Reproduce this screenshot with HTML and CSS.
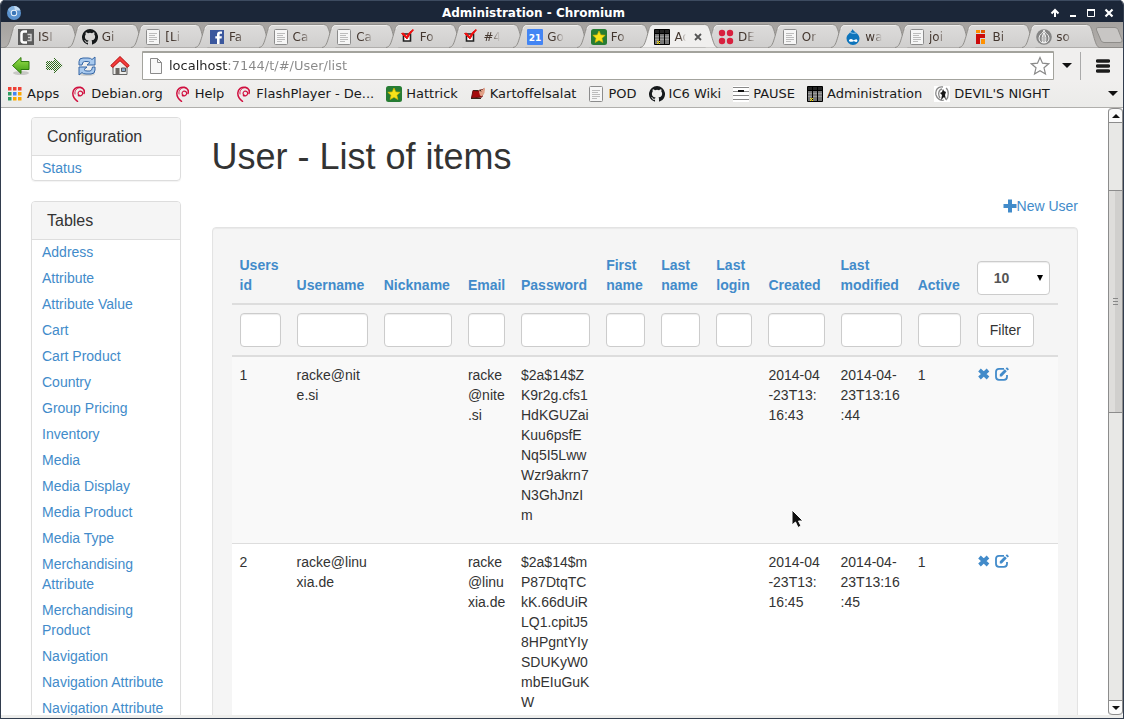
FILE: index.html
```html
<!DOCTYPE html>
<html lang="en">
<head>
<meta charset="utf-8">
<title>Administration - Chromium</title>
<link rel="stylesheet" href="styles.css">
</head>
<body>
<svg class="defs" aria-hidden="true">
  <defs>
    <linearGradient id="g-tab" x1="0" y1="0" x2="0" y2="1"><stop offset="0" stop-color="#dddcdb"/><stop offset="1" stop-color="#d0cfce"/></linearGradient>
    <linearGradient id="g-green" x1="0" y1="0" x2="0" y2="1"><stop offset="0" stop-color="#9be04c"/><stop offset="1" stop-color="#3c9a10"/></linearGradient>
    <pattern id="dots" width="2" height="2" patternUnits="userSpaceOnUse"><path d="M0 0h1v1H0zM1 1h1v1H1z" fill="#2f6a1c"/></pattern>
  </defs>
  <symbol id="tab" viewBox="0 0 78 26" preserveAspectRatio="none"><path d="M0 25.5C4 25 5 21 7 14.5C9 7 10 2.500 14 2.500H65C69 2.500 70 7 72 14.500C74 21 75 25 78 25.500" stroke="#8f8d8a"/><path d="M10 7C11 4 12 3.500 14 3.500H65" fill="none" stroke="#eeedec"/></symbol>
  <symbol id="page" viewBox="0 0 16 16"><rect x="1.500" y=".5" width="13" height="15" rx="1" fill="#f6f6f6" stroke="#8c8c8c"/><path d="M4 4.500h8M4 6.500h6M4 8.500h8M4 10.500h8M4 12.500h5" stroke="#bcbcbc"/></symbol>
  <symbol id="c3" viewBox="0 0 16 16"><path fill="#5c5c5c" d="M0 0h16v16H0z"/><path d="M9 2.500H6Q3.500 2.500 3.500 5v6Q3.500 13.500 6 13.500h3" fill="none" stroke="#fff" stroke-width="2.500"/><path d="M9.500 5.500H13v6H9.500M10 8.500h3" fill="none" stroke="#d0d0d0" stroke-width="1.500"/></symbol>
  <symbol id="github" viewBox="0 0 16 16"><path fill="#15181a" d="M8 0a8 8 0 0 0-2.530 15.590c.4.070.55-.17.55-.38v-1.490c-2.230.48-2.690-.95-2.690-.95-.36-.92-.89-1.170-.89-1.170-.73-.5.050-.49.050-.49.810.060 1.230.83 1.230.83.720 1.230 1.880.87 2.340.67.070-.52.280-.87.510-1.070-1.780-.2-3.650-.89-3.650-3.950 0-.87.310-1.590.82-2.150-.08-.2-.36-1.020.08-2.120 0 0 .67-.21 2.200.82a7.600 7.600 0 0 1 4 0c1.530-1.040 2.200-.82 2.200-.82.440 1.100.16 1.920.08 2.120.51.560.82 1.270.82 2.150 0 3.070-1.870 3.750-3.650 3.950.29.250.54.730.54 1.480v2.190c0 .21.150.46.550.38A8 8 0 0 0 8 0z"/></symbol>
  <symbol id="facebook" viewBox="0 0 16 16"><path fill="#3b579d" d="M1 1h14v14H1z"/><path fill="#fff" d="M8 15V9.500H6.300V7.200H8V5.500C8 3.600 9 2.600 11 2.600h2v2.200h-1.200c-.9 0-1.200.4-1.200 1.100v1.300h2.300l-.3 2.300h-2V15z"/></symbol>
  <symbol id="check" viewBox="0 0 16 16"><path d="M3.500 5h7v7h-7z" fill="#fff" stroke="#222" stroke-width="1.600"/><path d="M1.500 4.500l2-.5 3 3.500Q9 3 13 .5l.5.500Q9.500 5 7 10z" fill="#ee1010" stroke="#ee1010"/></symbol>
  <symbol id="star-badge" viewBox="0 0 16 16"><rect width="16" height="16" rx="2.500" fill="#267c33"/><path fill="#f8e31a" stroke="#e0b800" stroke-width=".6" stroke-linejoin="round" d="M8 2l1.800 3.900 4.400.4-3.300 2.900 1 4.300L8 11.300l-3.900 2.200 1-4.300-3.300-2.900 4.400-.4z"/></symbol>
  <symbol id="table" viewBox="0 0 16 16"><path d="M.5.500h15v15H.5z" fill="#777" stroke="#000"/><path d="M1 1h14v3H1z" fill="#222"/><path d="M5.500 1v14M10.500 1v14M1 4.500h14" stroke="#000"/><path d="M1 7.500h14M1 10.500h14" stroke="#999" stroke-dasharray="4 1"/><path d="M3 12h1v1H3zM5 12h1v1H5zM4 13h1v1H4zM3 14h1v1H3zM5 14h1v1H5z" fill="#ffe500"/></symbol>
  <symbol id="four-dots" viewBox="0 0 16 16"><g fill="#d8203e"><circle cx="4" cy="4" r="3.200"/><circle cx="12" cy="4" r="3.200"/><circle cx="4" cy="12" r="3.200"/><circle cx="12" cy="12" r="3.200"/></g></symbol>
  <symbol id="drop" viewBox="0 0 16 16"><path fill="#0d74bb" d="M7.500 0c1 3 7 4.500 7 9.500a6.500 6.500 0 0 1-13 0C1.500 5 6.500 3.500 7.500 0z"/><path d="M5 3.500Q8 5 11.500 4" stroke="#8cc7ef" fill="none"/><path fill="#fff" d="M4 11c1.500-1.500 3-1 4 0s2.500-1.500 3.800-.5.500 2.800-.8 2.500-2-1.200-3-.6-4.500.8-4-1.400z"/></symbol>
  <symbol id="blocks" viewBox="0 0 16 16"><path fill="#ff9000" d="M3 1h4v3H3zM8 10h4v5H8z"/><path fill="#e05a00" d="M8 1h4v3H8z"/><path fill="#cc0a0a" d="M3 5h9v4H7v6H3z"/></symbol>
  <symbol id="onion" viewBox="0 0 16 16"><circle cx="8" cy="8" r="7.800" fill="#858585"/><path d="M8 1c0 3-5 4-5 8 0 3 2 5 5 5s5-2 5-5c0-4-5-5-5-8zM8 3v11M8 4C6 6 5.500 11 7 14M8 4c2 2 2.500 7 1 10" fill="none" stroke="#fff" stroke-width=".9"/></symbol>
  <symbol id="debian" viewBox="0 0 16 16"><path d="M8.500 9.200C6.500 8.600 6.600 5.800 8.600 5.200c2-.5 3.400 1 3 2.600-.3 1.700-2.600 2.600-4.300 1.800" fill="none" stroke="#d0103f" stroke-width="1.200" stroke-linecap="round"/><path d="M13 7.500C14 4.500 12.500 2 9.500 1.300 5.500.5 2 3 1.800 7c-.1 3.500 2 6.500 4.700 8.300" fill="none" stroke="#d0103f" stroke-width="1.500" stroke-linecap="round"/><path d="M13.300 4.500C12 1.500 8 .8 5.500 3.200 4 4.700 3.600 6.500 4 8" fill="none" stroke="#d0103f" stroke-width=".9" stroke-linecap="round"/></symbol>
  <symbol id="apps" viewBox="0 0 16 16"><path fill="#ee4035" d="M1 1h3.500v3.500H1zM6 1h3.500v3.500H6zM11 1h3.500v3.500H11z"/><path fill="#2f9e63" d="M1 6h3.500v3.500H1zM1 11h3.500v3.500H1z"/><path fill="#4385f4" d="M6 6h3.500v3.500H6z"/><path fill="#fba800" d="M11 6h3.500v3.500H11zM6 11h3.500v3.500H6zM11 11h3.500v3.500H11z"/></symbol>
  <symbol id="salad" viewBox="0 0 16 16"><path fill="#a50b0b" stroke="#651010" d="M1.500 12L3 4.500 8 5l6-2-2 8z"/><path fill="#e2a187" d="M9 6l1-2.500 2 .5 3-2.500-.5 5.500-2.500 3.500-2-1z"/><path d="M1 12.500h10M4 4.500h4M10 3.500l1 2" stroke="#382719"/></symbol>
  <symbol id="lines" viewBox="0 0 16 16"><path fill="#fff" d="M0 0h16v16H0z"/><path d="M0 1.500h16M0 5.500h16M0 9.500h16M0 13.500h16" stroke="#888"/><path d="M5 4h6v2H5z" fill="#111"/></symbol>
  <symbol id="night" viewBox="0 0 16 16"><path fill="#fff" d="M0 0h16v16H0z"/><path d="M9 1C4 0 1 4 2 9c1 4 5 6 8 5M8 3C4 4 4 9 6 12M12 2c3 2 3 9 0 12" fill="none" stroke="#888" stroke-width="1.300"/><path d="M9 3l1 2 2 1-1 3 1 5-2-3-3 3 1-5-2-2 2-1z" fill="#181818"/></symbol>
  <symbol id="remove" viewBox="0 0 14 14"><path d="M2.500 3l8.500 8M11 3l-8.500 8" stroke="currentColor" stroke-width="3.800"/></symbol>
  <symbol id="edit" viewBox="0 0 14 14"><path d="M9 1.800H4Q1 1.800 1 4.800v5Q1 12.800 4 12.800h5q3 0 3-3V8" fill="none" stroke="currentColor" stroke-width="1.800"/><path d="M4.800 9.500V7.200l5-5 2 2-5 5.300zM10.600 1.500L12 .2l2 2-1.300 1.400z" fill="currentColor"/></symbol>
</svg>

<div class="window">
  <header class="titlebar">
    <svg class="logo" viewBox="0 0 14 14"><circle cx="7" cy="7" r="7" fill="#5b93cf"/><path d="M7 0a7 7 0 0 1 6.500 4.500H7z" fill="#c3dbf2"/><path d="M1 3.500A7 7 0 0 1 7 0l1 4-4 4z" fill="#86b3e0"/><circle cx="7" cy="7" r="3.200" fill="#eaf3fb"/><circle cx="7" cy="7" r="2.300" fill="#3b76b7"/></svg>
    <div class="title">Administration - Chromium</div>
    <button class="wm" aria-label="Shade"><svg viewBox="0 0 10 10"><path d="M5 9V3M1.500 5.500L5 2l3.500 3.500" fill="none" stroke="#fff" stroke-width="2"/></svg></button>
    <button class="wm" aria-label="Minimize"><svg viewBox="0 0 10 10"><path d="M2 7h6v2H2z" fill="#fff"/></svg></button>
    <button class="wm" aria-label="Maximize"><svg viewBox="0 0 10 10"><path d="M1.500 2.500h7v6h-7z" fill="none" stroke="#fff"/><path d="M1 1h8v2H1z" fill="#fff"/></svg></button>
    <button class="wm" aria-label="Close"><svg viewBox="0 0 10 10"><path d="M1.500 1.500l7 7M8.500 1.500l-7 7" stroke="#fff" stroke-width="2.200"/></svg></button>
  </header>

  <nav class="tabs" aria-label="Tabs">
    <div class="tab"><svg class="shape"><use href="#tab"/></svg><svg class="ico"><use href="#c3"/></svg><span>ISI</span></div>
    <div class="tab"><svg class="shape"><use href="#tab"/></svg><svg class="ico"><use href="#github"/></svg><span>Gi</span></div>
    <div class="tab"><svg class="shape"><use href="#tab"/></svg><svg class="ico"><use href="#page"/></svg><span>[Li</span></div>
    <div class="tab"><svg class="shape"><use href="#tab"/></svg><svg class="ico"><use href="#facebook"/></svg><span>Fa</span></div>
    <div class="tab"><svg class="shape"><use href="#tab"/></svg><svg class="ico"><use href="#page"/></svg><span>Ca</span></div>
    <div class="tab"><svg class="shape"><use href="#tab"/></svg><svg class="ico"><use href="#page"/></svg><span>Ca</span></div>
    <div class="tab"><svg class="shape"><use href="#tab"/></svg><svg class="ico"><use href="#check"/></svg><span>Fo</span></div>
    <div class="tab"><svg class="shape"><use href="#tab"/></svg><svg class="ico"><use href="#check"/></svg><span>#4</span></div>
    <div class="tab"><svg class="shape"><use href="#tab"/></svg><b class="ico cal">21</b><span>Go</span></div>
    <div class="tab"><svg class="shape"><use href="#tab"/></svg><svg class="ico"><use href="#star-badge"/></svg><span>Fo</span></div>
    <div class="tab active"><svg class="shape"><use href="#tab"/></svg><svg class="ico"><use href="#table"/></svg><span>Ad</span><button class="close" aria-label="Close tab"><svg viewBox="0 0 8 8"><path d="M1 1l6 6M7 1L1 7" stroke="#555" stroke-width="1.800"/></svg></button></div>
    <div class="tab"><svg class="shape"><use href="#tab"/></svg><svg class="ico"><use href="#four-dots"/></svg><span>DE</span></div>
    <div class="tab"><svg class="shape"><use href="#tab"/></svg><svg class="ico"><use href="#page"/></svg><span>Or</span></div>
    <div class="tab"><svg class="shape"><use href="#tab"/></svg><svg class="ico"><use href="#drop"/></svg><span>wa</span></div>
    <div class="tab"><svg class="shape"><use href="#tab"/></svg><svg class="ico"><use href="#page"/></svg><span>joi</span></div>
    <div class="tab"><svg class="shape"><use href="#tab"/></svg><svg class="ico"><use href="#blocks"/></svg><span>Bi</span></div>
    <div class="tab"><svg class="shape"><use href="#tab"/></svg><svg class="ico"><use href="#onion"/></svg><span>so</span></div>
    <button class="newtab" aria-label="New tab"><svg viewBox="0 0 28 18"><path d="M3 1.500h17q2 0 3 2l4 10q1 3-2 3H9q-2 0-3-2L1.500 4q-1-2.500 1.500-2.500z" fill="#c8c6c4" stroke="#8f8d8a"/></svg></button>
  </nav>

  <div class="toolbar">
    <button class="tool" aria-label="Back"><svg viewBox="0 0 20 20"><ellipse cx="10" cy="17" rx="8" ry="2" fill="#c8c8c5"/><path d="M1.500 9.500L10 1.500V5.500h8v8h-8v4z" fill="url(#g-green)" stroke="#2d7a0c"/></svg></button>
    <button class="tool" aria-label="Forward"><svg viewBox="0 0 20 20"><path d="M19 9.500L10 1v4H2v9h8v4z" fill="url(#dots)"/></svg></button>
    <button class="tool" aria-label="Reload"><svg viewBox="0 0 20 20"><ellipse cx="10" cy="18" rx="8" ry="2" fill="#d2d2cf"/><path d="M2 9V5.500Q2 2 6 2h5q3 0 4 1.500L18 1v8h-8l3-2.500Q12 5.500 10 5.500H7.500Q5.500 5.500 5 9z" fill="#a8c9ee" stroke="#3465a4"/><path d="M18 11v3q0 4-4 4H9q-3 0-4-1.500L2 19v-8h8l-3 2.500q1 1.500 3 1.500h3q2 0 2.500-4z" fill="#a8c9ee" stroke="#3465a4"/></svg></button>
    <button class="tool" aria-label="Home"><svg viewBox="0 0 20 20"><path d="M3 9l7-6 7 6v9.500H3z" fill="#eeeeec" stroke="#666"/><path d="M5.500 12h4v6.500h-4z" fill="#6c6864"/><path d="M11.500 12h4v3.500h-4z" fill="#89a9cc" stroke="#555"/><path d="M.8 9.500L10 .5l9.200 9-1.900 2L10 4.700l-7.300 6.800z" fill="#f43b3b" stroke="#b30c0c"/></svg></button>
    <label class="omnibox">
      <svg class="doc" viewBox="0 0 12 16"><path d="M.5.500h7l4 4v11H.5z" fill="#f8f8f8" stroke="#8a8a8a"/><path d="M7.500.5v4h4" fill="none" stroke="#8a8a8a"/></svg>
      <input type="text" aria-label="Address" value="localhost:7144/t/#/User/list">
      <svg class="fav" viewBox="0 0 20 20"><path d="M10 1.500l2.500 5.700 6.200.6-4.700 4 1.500 6.200L10 14.800 4.500 18 6 11.800l-4.700-4 6.200-.6z" fill="#fff" stroke="#8a8a8a" stroke-width="1.200"/></svg>
    </label>
    <button class="drop" aria-label="Address history"><i class="tri"></i></button>
    <button class="menu" aria-label="Menu"><svg viewBox="0 0 14 14"><path d="M1.500 2h11M1.500 7h11M1.500 12h11" stroke="#1c1c1c" stroke-width="3.400" stroke-linecap="round"/></svg></button>
  </div>

  <nav class="bookmarks" aria-label="Bookmarks">
    <a href="#"><svg class="ico"><use href="#apps"/></svg>Apps</a>
    <a href="#"><svg class="ico"><use href="#debian"/></svg>Debian.org</a>
    <a href="#"><svg class="ico"><use href="#debian"/></svg>Help</a>
    <a href="#"><svg class="ico"><use href="#debian"/></svg>FlashPlayer - De...</a>
    <a href="#"><svg class="ico"><use href="#star-badge"/></svg>Hattrick</a>
    <a href="#"><svg class="ico"><use href="#salad"/></svg>Kartoffelsalat</a>
    <a href="#"><svg class="ico"><use href="#page"/></svg>POD</a>
    <a href="#"><svg class="ico"><use href="#github"/></svg>IC6 Wiki</a>
    <a href="#"><svg class="ico"><use href="#lines"/></svg>PAUSE</a>
    <a href="#"><svg class="ico"><use href="#table"/></svg>Administration</a>
    <a href="#"><svg class="ico"><use href="#night"/></svg>DEVIL'S NIGHT</a>
    <button class="more" aria-label="More bookmarks"><i class="tri"></i></button>
  </nav>

  <div class="viewport">
    <div class="page">
      <aside>
        <section class="panel">
          <h3>Configuration</h3>
          <ul><li><a href="#">Status</a></li></ul>
        </section>
        <section class="panel">
          <h3>Tables</h3>
          <ul>
            <li><a href="#">Address</a></li>
            <li><a href="#">Attribute</a></li>
            <li><a href="#">Attribute Value</a></li>
            <li><a href="#">Cart</a></li>
            <li><a href="#">Cart Product</a></li>
            <li><a href="#">Country</a></li>
            <li><a href="#">Group Pricing</a></li>
            <li><a href="#">Inventory</a></li>
            <li><a href="#">Media</a></li>
            <li><a href="#">Media Display</a></li>
            <li><a href="#">Media Product</a></li>
            <li><a href="#">Media Type</a></li>
            <li><a href="#">Merchandising Attribute</a></li>
            <li><a href="#">Merchandising Product</a></li>
            <li><a href="#">Navigation</a></li>
            <li><a href="#">Navigation Attribute</a></li>
            <li><a href="#">Navigation Attribute</a></li>
          </ul>
        </section>
      </aside>
      <main>
        <h1>User - List of items</h1>
        <div class="actions"><a href="#"><svg viewBox="0 0 14 14"><path d="M5 .500h4V5h4.500v4H9v4.500H5V9H.500V5H5z" fill="currentColor"/></svg>New User</a></div>
        <div class="well">
          <table>
            <colgroup><col class="w57"><col class="w87"><col class="w84"><col class="w53"><col class="w85"><col class="w55"><col class="w55"><col class="w52"><col class="w72"><col class="w77"><col class="w59"><col class="w89"></colgroup>
            <thead>
              <tr>
                <th><a href="#">Users id</a></th><th><a href="#">Username</a></th><th><a href="#">Nickname</a></th><th><a href="#">Email</a></th><th><a href="#">Password</a></th><th><a href="#">First name</a></th><th><a href="#">Last name</a></th><th><a href="#">Last login</a></th><th><a href="#">Created</a></th><th><a href="#">Last modified</a></th><th><a href="#">Active</a></th>
                <th><select aria-label="Rows per page"><option>10</option><option>25</option><option>50</option></select></th>
              </tr>
              <tr>
                <th><input type="text" aria-label="Users id"></th><th><input type="text" aria-label="Username"></th><th><input type="text" aria-label="Nickname"></th><th><input type="text" aria-label="Email"></th><th><input type="text" aria-label="Password"></th><th><input type="text" aria-label="First name"></th><th><input type="text" aria-label="Last name"></th><th><input type="text" aria-label="Last login"></th><th><input type="text" aria-label="Created"></th><th><input type="text" aria-label="Last modified"></th><th><input type="text" aria-label="Active"></th>
                <th><button class="filter">Filter</button></th>
              </tr>
            </thead>
            <tbody>
              <tr>
                <td>1</td><td>racke@nit<br>e.si</td><td></td><td>racke<br>@nite<br>.si</td>
                <td><p>$2a$14$Z<br>K9r2g.cfs1<br>HdKGUZai<br>Kuu6psfE<br>Nq5I5Lww<br>Wzr9akrn7<br>N3GhJnzI<br>m</p></td>
                <td></td><td></td><td></td><td>2014-04<br>-23T13:<br>16:43</td><td>2014-04-<br>23T13:16<br>:44</td><td>1</td>
                <td><div class="ops"><a href="#" aria-label="Delete"><svg><use href="#remove"/></svg></a><a href="#" aria-label="Edit"><svg><use href="#edit"/></svg></a></div></td>
              </tr>
              <tr>
                <td>2</td><td>racke@linu<br>xia.de</td><td></td><td>racke<br>@linu<br>xia.de</td>
                <td><p>$2a$14$m<br>P87DtqTC<br>kK.66dUiR<br>LQ1.cpitJ5<br>8HPgntYIy<br>SDUKyW0<br>mbEIuGuK<br>W</p></td>
                <td></td><td></td><td></td><td>2014-04<br>-23T13:<br>16:45</td><td>2014-04-<br>23T13:16<br>:45</td><td>1</td>
                <td><div class="ops"><a href="#" aria-label="Delete"><svg><use href="#remove"/></svg></a><a href="#" aria-label="Edit"><svg><use href="#edit"/></svg></a></div></td>
              </tr>
            </tbody>
          </table>
        </div>
      </main>
    </div>
    <div class="scrollbar" aria-hidden="true">
      <div class="sb-btn up"><i class="tri"></i></div>
      <div class="sb-before"></div>
      <div class="sb-thumb"><i></i><i></i><i></i></div>
      <div class="sb-after"></div>
      <div class="sb-btn down"><i class="tri"></i></div>
    </div>
  </div>
  <svg class="pointer" viewBox="0 0 14 20"><path d="M1 1v15l3.500-3 2.500 5.500 3-1.500-2.500-5H12z" fill="#111" stroke="#fff"/></svg>
</div>
</body>
</html>
```
FILE: styles.css
```css
* { box-sizing: border-box; }
body { margin: 0; background: #fff; font: 14px/20px "Liberation Sans", Arial, sans-serif; color: #333; }
button { padding: 0; border: 0; background: none; color: inherit; font: inherit; display: grid; place-items: center; }
svg { display: block; }
a { color: #428bca; text-decoration: none; }
.defs { position: absolute; width: 0; height: 0; }

.window {
  position: relative; height: 100vh; display: flex; flex-direction: column; overflow: hidden;
  border: 1px solid #323d4e; border-width: 0 1px 1px; border-radius: 5px 5px 0 0;
  background: #ededeb; padding-bottom: 3px;
}

/* window frame */
.titlebar { flex: none; height: 22px; padding: 2px 5px 0 6px; display: flex; align-items: center; background: #1b2638; border-top: 1px solid #3d4b60; }
.logo { width: 14px; height: 14px; }
.title { flex: 1; text-align: center; color: #fff; font: bold 12px/20px "DejaVu Sans", sans-serif; }
.wm { width: 18px; height: 18px; }
.wm svg { width: 10px; height: 10px; }

/* tab strip */
.tabs { flex: none; height: 26px; padding-left: 3px; display: flex; background: linear-gradient(#a5a29f, #b3b0ad); box-shadow: inset 0 -1px #8f8d8a; font: 12px/20px "DejaVu Sans", sans-serif; }
.tab { position: relative; flex: 1; min-width: 0; display: flex; align-items: center; gap: 4px; padding: 3px 0 0 14px; }
.shape { position: absolute; top: 0; left: 0; width: calc(100% + 14px); height: 26px; fill: url(#g-tab); }
.tab.active { z-index: 2; }
.tab.active .shape { fill: #f0efee; }
.ico { position: relative; flex: none; width: 16px; height: 16px; }
.tab span { position: relative; white-space: nowrap; color: #44372f; -webkit-mask-image: linear-gradient(to right, #000 8px, transparent 17px); mask-image: linear-gradient(to right, #000 8px, transparent 17px); }
.tab.active span { flex: none; -webkit-mask-image: linear-gradient(to right, #000 6px, transparent 12px); mask-image: linear-gradient(to right, #000 6px, transparent 12px); }
.cal { background: #4385f4; color: #fff; font: bold 9px/18px "DejaVu Sans", sans-serif; text-align: center; border-radius: 1px; }
.close { position: relative; flex: none; width: 8px; height: 8px; }
.close svg { width: 8px; height: 8px; }
.newtab { position: relative; flex: none; width: 28px; margin-left: 9px; }
.newtab svg { width: 28px; height: 18px; }

/* toolbar */
.toolbar { flex: none; height: 33px; display: flex; align-items: center; padding: 2px 12px 0 10px; background: #f0efee; }
.tool { width: 20px; height: 20px; margin-right: 13px; }
.tool svg { width: 20px; height: 20px; }
.tool + .omnibox { margin-left: -1px; }
.omnibox { flex: 1; height: 29px; display: flex; align-items: center; gap: 7px; padding: 0 3px 0 7px; border: 1px solid #a3a39d; border-top-width: 2px; border-radius: 1px; background: #fff; }
.doc { width: 12px; height: 16px; }
.omnibox input { flex: 1; min-width: 0; padding: 0; border: 0; outline: 0; font: 13px/20px "DejaVu Sans", sans-serif; color: transparent; background: linear-gradient(to right, #222 59px, #888 59px); -webkit-background-clip: text; background-clip: text; }
.fav { width: 20px; height: 20px; }
.tri { display: block; border: 5px solid transparent; border-top-color: #111; border-bottom-width: 0; }
.drop { width: 27px; height: 28px; border-right: 1px solid #aaa; }
.menu { margin-left: 14px; width: 16px; height: 16px; }
.menu svg { width: 14px; height: 14px; }

/* bookmarks */
.bookmarks { flex: none; height: 27px; padding: 0 5px 1px 6px; display: flex; align-items: center; gap: 12px; border-bottom: 1px solid #b0afac; background: linear-gradient(#f0efee, #ebebe9); font: 13px/20px "DejaVu Sans", sans-serif; white-space: nowrap; }
.bookmarks a { display: flex; align-items: center; gap: 4px; color: #1a1a1a; }
.more { margin-left: auto; }

/* page */
.viewport { flex: 1; min-height: 0; display: flex; background: #fff; }
.page { flex: 1; min-width: 0; overflow: hidden; display: grid; grid-template-columns: 1fr 5fr; align-content: start; padding: 9px 15px; }
aside, main { min-width: 0; padding: 0 15px; }
main { padding-left: 16px; }
.panel { margin-bottom: 20px; border: 1px solid #ddd; border-radius: 4px; overflow: hidden; box-shadow: 0 1px 1px rgba(0, 0, 0, .05); }
.panel h3 { margin: 0; padding: 10px 15px 9px; font-size: 16px; line-height: 18px; font-weight: normal; background: #f5f5f5; border-bottom: 1px solid #ddd; }
.panel ul { list-style: none; margin: -1px 0; padding: 0; }
.panel li { padding: 3px 10px; }
.panel a { display: block; }
h1 { margin: 20px 0 30px; font-size: 36px; line-height: 40px; font-weight: normal; }
.actions { display: flex; justify-content: flex-end; margin-top: -11px; margin-bottom: 11px; }
.actions a { display: flex; align-items: center; }
.actions svg { width: 14px; height: 14px; }
.well { padding: 19px; border: 1px solid #e3e3e3; border-radius: 4px; background: #f5f5f5; box-shadow: inset 0 1px 1px rgba(0, 0, 0, .05); }
table { width: 100%; table-layout: fixed; border-collapse: separate; border-spacing: 0; }
.w57 { width: 57px; } .w87 { width: 87px; } .w84 { width: 84px; } .w53 { width: 53px; }
.w85 { width: 85px; } .w55 { width: 55px; } .w52 { width: 52px; } .w72 { width: 72px; }
.w77 { width: 77px; } .w59 { width: 59px; } .w89 { width: 89px; }
th { padding: 8px; text-align: left; vertical-align: bottom; border-bottom: 2px solid #ddd; }
td { padding: 8px; vertical-align: top; white-space: nowrap; border-bottom: 1px solid #ddd; }
tbody tr:nth-child(odd) { background: #f9f9f9; }
tbody tr:nth-child(even) { background: #fff; }
td p { margin: 0 0 10px; }
th input { display: block; width: 100%; height: 34px; padding: 6px; border: 1px solid #ccc; border-radius: 4px; background: #fff; box-shadow: inset 0 1px 1px rgba(0, 0, 0, .075); font: inherit; }
select { display: block; width: 100%; height: 34px; padding: 6px 16px; border: 1px solid #ccc; border-radius: 4px; color: #555; font: bold 14px/20px "Liberation Sans", Arial, sans-serif; appearance: none; background: #fff; box-shadow: inset 0 1px 1px rgba(0, 0, 0, .075); }
th:has(select) { position: relative; }
th:has(select)::after { content: ""; position: absolute; right: 15px; bottom: 22px; border: 3px solid transparent; border-top: 6px solid #000; border-bottom: 0; }
.filter { height: 34px; padding: 6px 12px; border: 1px solid #ccc; border-radius: 4px; background: #fff; font-weight: normal; }
.ops { display: flex; gap: 4px; padding-top: 2px; }
.ops svg { width: 14px; height: 14px; }

/* scrollbar */
.scrollbar { flex: none; width: 15px; display: flex; flex-direction: column; background: #e8e8e6; border: 1px solid #8c8c8c; border-width: 0 1px; border-radius: 4px; }
.sb-btn { flex: none; height: 15px; display: grid; place-items: center; background: #fbfbfb; border: 1px solid #8c8c8c; border-width: 1px 0; }
.sb-btn .tri { border-width: 4px 4px 0; }
.sb-btn.up { border-radius: 4px 4px 0 0; }
.sb-btn.up .tri { transform: rotate(180deg); }
.sb-btn.down { border-radius: 0 0 4px 4px; }
.sb-before { flex: 67; }
.sb-after { flex: 288; }
.sb-thumb { flex: 222; display: flex; flex-direction: column; align-items: center; justify-content: center; gap: 2px; border: 1px solid #8c8c8c; border-width: 1px 0; background: linear-gradient(to right, #dedddb 50%, #d0cfcd 50%); }
.sb-thumb i { width: 5px; height: 1px; background: #888; }

.pointer { position: absolute; left: 790px; top: 509px; width: 14px; height: 20px; }
```
